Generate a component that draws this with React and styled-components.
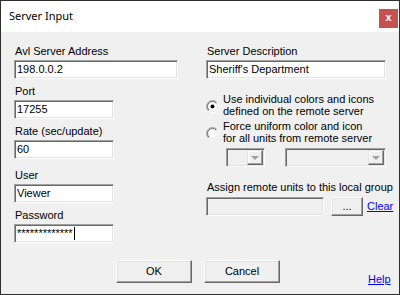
import React from "react";
import styled, { createGlobalStyle } from "styled-components";

const Global = createGlobalStyle`
  html, body { margin: 0; padding: 0; background: #f0f0f0; }
  * { box-sizing: border-box; }
`;

const Window = styled.div`
  width: 400px;
  height: 295px;
  border: 1px solid #2e2e2e;
  display: flex;
  flex-direction: column;
  background: #f0f0f0;
  overflow: hidden;
`;

const TitleBar = styled.div`
  height: 31px;
  flex: none;
  background: #ffffff;
  display: flex;
  align-items: flex-start;
  padding-left: 8px;
`;

const Title = styled.div`
  font-family: "Noto Sans", "Open Sans", sans-serif;
  font-size: 11px;
  line-height: 15px;
  margin-top: 7px;
  color: #000;
`;

const CloseButton = styled.div`
  width: 19px;
  height: 19px;
  margin-top: 8px;
  margin-left: auto;
  margin-right: 1px;
  background: #c75050;
  color: #fff;
  font-family: "Liberation Sans", Arial, sans-serif;
  font-weight: bold;
  font-size: 11px;
  line-height: 11px;
  display: flex;
  align-items: center;
  justify-content: center;
  padding-bottom: 2px;
`;

const Body = styled.div`
  flex: 1;
  padding: 13px 0 0 13px;
  font-family: "Liberation Sans", Arial, sans-serif;
  font-size: 11px;
  line-height: 13px;
  color: #000;
  display: flex;
  flex-direction: column;
`;

const Columns = styled.div`
  display: flex;
  align-items: flex-start;
`;

const Column = styled.div`
  display: flex;
  flex-direction: column;
  width: ${(p) => p.$width}px;
  margin-left: ${(p) => p.$offset || 0}px;
`;

const Field = styled.div`
  display: flex;
  flex-direction: column;
  gap: 2px;
  margin-top: ${(p) => p.$top || 0}px;
`;

const Label = styled.div`
  height: 13px;
  padding-left: ${(p) => (p.$indent != null ? p.$indent : 1)}px;
  white-space: nowrap;
  margin-top: ${(p) => p.$top || 0}px;
`;

const TextBox = styled.div`
  width: ${(p) => p.$width}px;
  height: 19px;
  flex: none;
  border: 1px solid;
  border-color: #a0a0a0 #ffffff #ffffff #a0a0a0;
  box-shadow: inset 1px 1px 0 #696969, inset -1px -1px 0 #e3e3e3;
  background: ${(p) => (p.$disabled ? "#f0f0f0" : "#ffffff")};
  padding: 0 2px;
  display: flex;
  align-items: center;
  white-space: nowrap;
  overflow: hidden;
`;

const Caret = styled.span`
  display: inline-block;
  width: 1px;
  height: 13px;
  background: #000;
  margin-left: 1px;
`;

const RadioRow = styled.div`
  display: flex;
  align-items: flex-start;
  gap: 4px;
  margin-top: ${(p) => p.$top || 0}px;
`;

const RadioIcon = styled.svg`
  flex: none;
  margin-top: 7px;
`;

const RadioText = styled.div`
  line-height: 12px;
  white-space: nowrap;
`;

const ComboRow = styled.div`
  display: flex;
  margin-top: 4px;
  margin-left: 20px;
  gap: 20px;
`;

const Combo = styled.div`
  width: ${(p) => p.$width}px;
  height: 19px;
  border: 1px solid;
  border-color: #a0a0a0 #ffffff #ffffff #a0a0a0;
  box-shadow: inset 1px 1px 0 #696969, inset -1px -1px 0 #e3e3e3;
  background: #f0f0f0;
  padding: 1px;
  display: flex;
  justify-content: flex-end;
`;

const DropButton = styled.div`
  width: 16px;
  height: 100%;
  border: 1px solid;
  border-color: #e3e3e3 #696969 #696969 #e3e3e3;
  box-shadow: inset -1px -1px 0 #a0a0a0, inset 1px 1px 0 #ffffff;
  background: #f0f0f0;
  display: flex;
  align-items: center;
  justify-content: center;
`;

const Arrow = styled.div`
  width: 0;
  height: 0;
  border-left: 4px solid transparent;
  border-right: 4px solid transparent;
  border-top: 4px solid #a0a0a0;
  margin-top: 1px;
`;

const GroupRow = styled.div`
  display: flex;
  align-items: center;
  margin-top: 3px;
  width: 200px;
`;

const Button = styled.div`
  width: ${(p) => p.$width}px;
  height: ${(p) => p.$height}px;
  margin-left: ${(p) => p.$left || 0}px;
  flex: none;
  border: 1px solid;
  border-color: #ffffff #696969 #696969 #ffffff;
  box-shadow: inset -1px -1px 0 #a0a0a0, inset 1px 1px 0 #e3e3e3;
  background: #f0f0f0;
  display: flex;
  align-items: center;
  justify-content: center;
  color: #000;
`;

const Link = styled.a`
  color: #0000ff;
  text-decoration: underline;
  margin-left: ${(p) => p.$left || 0}px;
  margin-top: ${(p) => p.$top || 0}px;
  cursor: pointer;
`;

const Footer = styled.div`
  display: flex;
  align-items: flex-start;
  margin-top: 17px;
`;

function Radio({ checked, id }) {
  return (
    <RadioIcon width="13" height="13" viewBox="0 0 13 13">
      <defs>
        <linearGradient id={`ro${id}`} x1="0" y1="0" x2="1" y2="1">
          <stop offset="0.5" stopColor="#a0a0a0" />
          <stop offset="0.5" stopColor="#ffffff" />
        </linearGradient>
        <linearGradient id={`ri${id}`} x1="0" y1="0" x2="1" y2="1">
          <stop offset="0.5" stopColor="#696969" />
          <stop offset="0.5" stopColor="#e3e3e3" />
        </linearGradient>
      </defs>
      <circle cx="6.5" cy="6.5" r="6" fill="none" stroke={`url(#ro${id})`} strokeWidth="1" />
      <circle cx="6.5" cy="6.5" r="5" fill="#ffffff" stroke={`url(#ri${id})`} strokeWidth="1" />
      {checked && <circle cx="6.5" cy="6.5" r="2" fill="#000" />}
    </RadioIcon>
  );
}

export default function App() {
  return (
    <>
      <Global />
      <Window>
        <TitleBar>
          <Title>Server Input</Title>
          <CloseButton>x</CloseButton>
        </TitleBar>
        <Body>
          <Columns>
            <Column $width={164}>
              <Field>
                <Label>Avl Server Address</Label>
                <TextBox $width={164}>198.0.0.2</TextBox>
              </Field>
              <Field $top={6}>
                <Label>Port</Label>
                <TextBox $width={100}>17255</TextBox>
              </Field>
              <Field $top={6}>
                <Label>Rate (sec/update)</Label>
                <TextBox $width={100}>60</TextBox>
              </Field>
              <Field $top={10}>
                <Label>User</Label>
                <TextBox $width={100}>Viewer</TextBox>
              </Field>
              <Field $top={6}>
                <Label>Password</Label>
                <TextBox $width={100}>
                  *************
                  <Caret />
                </TextBox>
              </Field>
            </Column>
            <Column $width={190} $offset={28}>
              <Field>
                <Label>Server Description</Label>
                <TextBox $width={180}>Sheriff's Department</TextBox>
              </Field>
              <RadioRow $top={14}>
                <Radio checked id="a" />
                <RadioText>
                  Use individual colors and icons
                  <br />
                  defined on the remote server
                </RadioText>
              </RadioRow>
              <RadioRow $top={3}>
                <Radio id="b" />
                <RadioText>
                  Force uniform color and icon
                  <br />
                  for all units from remote server
                </RadioText>
              </RadioRow>
              <ComboRow>
                <Combo $width={39}>
                  <DropButton>
                    <Arrow />
                  </DropButton>
                </Combo>
                <Combo $width={101}>
                  <DropButton>
                    <Arrow />
                  </DropButton>
                </Combo>
              </ComboRow>
              <Label $top={14}>Assign remote units to this local group</Label>
              <GroupRow>
                <TextBox $width={118} $disabled />
                <Button $width={32} $height={19} $left={7}>...</Button>
                <Link $left={4}>Clear</Link>
              </GroupRow>
            </Column>
          </Columns>
          <Footer>
            <Button $width={76} $height={23} $left={102}>OK</Button>
            <Button $width={76} $height={23} $left={12}>Cancel</Button>
            <Link $left={88} $top={13}>Help</Link>
          </Footer>
        </Body>
      </Window>
    </>
  );
}
